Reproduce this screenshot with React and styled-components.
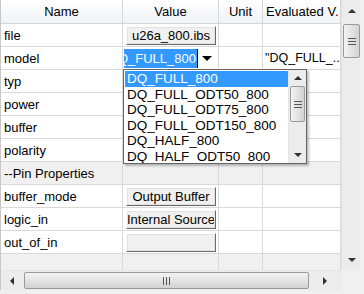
import React from "react";
import styled, { createGlobalStyle, css } from "styled-components";

const Global = createGlobalStyle`
  html, body { margin: 0; padding: 0; background: #f0f0f0; }
  body { font-family: "Liberation Sans", Arial, sans-serif; font-size: 13px; color: #000; }
`;

const COLS = [122, 96, 44, 78];

const Frame = styled.div`
  position: relative;
  width: 360px;
  height: 290px;
  display: grid;
  grid-template-columns: 340px 20px;
  grid-template-rows: 270px 20px;
  background: #fff;
  border-left: 1px solid #c8c8c8;
  box-sizing: border-box;
  overflow: hidden;
`;

const Table = styled.div`
  overflow: hidden;
  display: flex;
  flex-direction: column;
`;

const HeaderRow = styled.div`
  display: grid;
  grid-template-columns: ${COLS.map((c) => c + "px").join(" ")};
  height: 24px;
  flex: none;
`;

const HeadCell = styled.div`
  display: flex;
  align-items: center;
  justify-content: center;
  background: linear-gradient(#ffffff, #f1f2f4);
  border-right: 1px solid #d5d5d5;
  border-bottom: 1px solid #d5d5d5;
  white-space: nowrap;
  overflow: hidden;
  font-size: 13px;
  ${(p) => p.$left && css`justify-content: flex-start; padding-left: 3px;`}
`;

const Row = styled.div`
  display: grid;
  grid-template-columns: ${COLS.map((c) => c + "px").join(" ")};
  height: 23px;
  flex: none;
  background: ${(p) => (p.$group ? "#f0f0f0" : "#fff")};
`;

const Cell = styled.div`
  display: flex;
  align-items: center;
  padding-left: 3px;
  border-right: 1px solid #d9d9d9;
  border-bottom: 1px solid #d9d9d9;
  white-space: nowrap;
  overflow: hidden;
  box-sizing: border-box;
  ${(p) => p.$pad && css`padding: 1px 2px 1px 3px;`}
  ${(p) => p.$tight && css`padding-left: 2px; font-size: 12.5px;`}
`;

const CellButton = styled.div`
  flex: 1;
  height: 19px;
  box-sizing: border-box;
  display: flex;
  align-items: center;
  justify-content: center;
  background: #f0f0f0;
  border: 1px solid;
  border-color: #ffffff #696969 #696969 #ffffff;
  box-shadow: inset -1px -1px 0 #a0a0a0;
  outline: 1px solid #e3e3e3;
  outline-offset: -2px;
  white-space: nowrap;
  overflow: hidden;
`;

const Combo = styled.div`
  flex: 1;
  height: 21px;
  display: flex;
  align-items: stretch;
  background: #fff;
  margin-left: -2px;
  overflow: hidden;
`;

const ComboText = styled.div`
  flex: 1;
  overflow: hidden;
  display: flex;
  align-items: center;
  justify-content: flex-end;
`;

const Selected = styled.span`
  flex: none;
  background: #3399ff;
  color: #fff;
  padding-right: 1px;
  line-height: 19px;
  border-right: 1px solid #000;
`;

const ComboArrow = styled.div`
  width: 18px;
  flex: none;
  display: flex;
  align-items: center;
  justify-content: center;
  background: #fff;
`;

const List = styled.div`
  position: absolute;
  left: 122px;
  top: 69px;
  width: 184px;
  height: 95px;
  box-sizing: border-box;
  border: 1px solid #646464;
  background: #fff;
  box-shadow: 2px 2px 2px rgba(0, 0, 0, 0.25);
  display: flex;
`;

const Items = styled.div`
  flex: 1;
  padding-top: 1px;
  overflow: hidden;
`;

const Item = styled.div`
  height: 15.5px;
  line-height: 15.5px;
  padding-left: 2px;
  margin-left: 1px;
  white-space: nowrap;
  font-size: 13.5px;
  ${(p) => p.$active && css`background: #3399ff; color: #fff;`}
`;

const VBar = styled.div`
  display: flex;
  flex-direction: column;
  background: #ececec;
  border-left: 1px solid #e4e4e4;
  width: ${(p) => p.$w || 20}px;
  box-sizing: border-box;
`;

const HBar = styled.div`
  display: flex;
  background: #ececec;
  border-top: 1px solid #e4e4e4;
`;

const ArrowBox = styled.div`
  flex: none;
  display: flex;
  align-items: center;
  justify-content: center;
  width: ${(p) => p.$w || 19}px;
  height: ${(p) => p.$h || 17}px;
`;

const Track = styled.div`
  flex: 1;
  display: flex;
  flex-direction: ${(p) => (p.$vertical ? "column" : "row")};
`;

const Thumb = styled.div`
  flex: none;
  box-sizing: border-box;
  border: 1px solid #9a9a9a;
  border-radius: 2px;
  display: flex;
  align-items: center;
  justify-content: center;
  ${(p) =>
    p.$vertical
      ? css`
          height: ${p.$size}px;
          margin: ${p.$offset}px 1px 0 1px;
          background: linear-gradient(90deg, #f3f3f3, #e3e3e3 50%, #d2d2d2);
        `
      : css`
          width: ${p.$size}px;
          margin: 1px 0 1px ${p.$offset}px;
          background: linear-gradient(#f3f3f3, #e3e3e3 50%, #d2d2d2);
        `}
`;

const Corner = styled.div`
  background: #f0f0f0;
`;

const Tri = ({ dir, size = 4, color = "#333" }) => {
  const pts = {
    up: `0,${size} ${size},0 ${size * 2},${size}`,
    down: `0,0 ${size},${size} ${size * 2},0`,
    left: `${size},0 0,${size} ${size},${size * 2}`,
    right: `0,0 ${size},${size} 0,${size * 2}`,
  }[dir];
  const w = dir === "up" || dir === "down" ? size * 2 : size;
  const h = dir === "up" || dir === "down" ? size : size * 2;
  return (
    <svg width={w} height={h} viewBox={`0 0 ${w} ${h}`}>
      <polygon points={pts} fill={color} />
    </svg>
  );
};

const Grip = ({ vertical }) => (
  <svg width={vertical ? 8 : 7} height={vertical ? 7 : 8}>
    {[0, 3, 6].map((o) =>
      vertical ? (
        <rect key={o} x="0" y={o} width="8" height="1" fill="#555" />
      ) : (
        <rect key={o} x={o} y="0" width="1" height="8" fill="#555" />
      )
    )}
  </svg>
);

const rows = [
  { name: "file", value: { button: "u26a_800.ibs" } },
  { name: "model", value: { combo: true }, evaluated: '"DQ_FULL_...' },
  { name: "typ" },
  { name: "power" },
  { name: "buffer" },
  { name: "polarity" },
  { name: "--Pin Properties", group: true },
  { name: "buffer_mode", value: { button: "Output Buffer" } },
  { name: "logic_in", value: { button: "Internal Source" } },
  { name: "out_of_in", value: { button: "" } },
  { name: "", group: true },
];

const models = [
  "DQ_FULL_800",
  "DQ_FULL_ODT50_800",
  "DQ_FULL_ODT75_800",
  "DQ_FULL_ODT150_800",
  "DQ_HALF_800",
  "DQ_HALF_ODT50_800",
];

const ValueCell = ({ value }) => {
  if (!value) return <Cell />;
  if (value.combo)
    return (
      <Cell $pad>
        <Combo>
          <ComboText>
            <Selected>DQ_FULL_800</Selected>
          </ComboText>
          <ComboArrow>
            <Tri dir="down" size={5} color="#000" />
          </ComboArrow>
        </Combo>
      </Cell>
    );
  return (
    <Cell $pad>
      <CellButton>{value.button}</CellButton>
    </Cell>
  );
};

export default function App() {
  return (
    <>
      <Global />
      <Frame>
        <Table>
          <HeaderRow>
            <HeadCell>Name</HeadCell>
            <HeadCell>Value</HeadCell>
            <HeadCell>Unit</HeadCell>
            <HeadCell $left>Evaluated V.</HeadCell>
          </HeaderRow>
          {rows.map((r, i) => (
            <Row key={i} $group={r.group}>
              <Cell>{r.name}</Cell>
              <ValueCell value={r.value} />
              <Cell />
              <Cell $tight>{r.evaluated}</Cell>
            </Row>
          ))}
        </Table>
        <VBar>
          <ArrowBox $w={19} $h={22}>
            <Tri dir="up" />
          </ArrowBox>
          <Track $vertical>
            <Thumb $vertical $size={34} $offset={2}>
              <Grip vertical />
            </Thumb>
          </Track>
          <ArrowBox $w={19} $h={20}>
            <Tri dir="down" />
          </ArrowBox>
        </VBar>
        <HBar>
          <ArrowBox $w={22} $h={19}>
            <Tri dir="left" />
          </ArrowBox>
          <Track>
            <Thumb $size={285} $offset={1}>
              <Grip />
            </Thumb>
          </Track>
          <ArrowBox $w={32} $h={19}>
            <Tri dir="right" />
          </ArrowBox>
        </HBar>
        <Corner />
        <List>
          <Items>
            {models.map((m, i) => (
              <Item key={m} $active={i === 0}>
                {m}
              </Item>
            ))}
          </Items>
          <VBar $w={18}>
            <ArrowBox $w={17} $h={16}>
              <Tri dir="up" />
            </ArrowBox>
            <Track $vertical>
              <Thumb $vertical $size={36} $offset={0}>
                <Grip vertical />
              </Thumb>
            </Track>
            <ArrowBox $w={17} $h={16}>
              <Tri dir="down" />
            </ArrowBox>
          </VBar>
        </List>
      </Frame>
    </>
  );
}
